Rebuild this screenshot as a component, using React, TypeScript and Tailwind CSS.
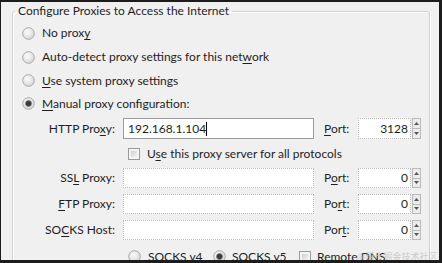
import React from 'react'

const font = { fontFamily: 'Lato, "Open Sans", sans-serif' }

const Radio: React.FC<{ checked?: boolean }> = ({ checked }) => (
  <svg width="13" height="13" viewBox="0 0 13 13" className="shrink-0">
    <defs>
      <radialGradient id={checked ? 'rg1' : 'rg0'} cx="40%" cy="35%" r="70%">
        <stop offset="0%" stopColor="#fbfbfb" />
        <stop offset="100%" stopColor="#d6d6d6" />
      </radialGradient>
    </defs>
    <circle cx="6.5" cy="6.5" r="5.8" fill={`url(#${checked ? 'rg1' : 'rg0'})`} stroke="#a9a9a9" strokeWidth="1" />
    {checked && <circle cx="6.5" cy="6.5" r="3" fill="#3a3a3a" stroke="#777" strokeWidth="0.8" />}
  </svg>
)

const Check: React.FC = () => (
  <span className="w-[12px] h-[12px] shrink-0 border border-[#9a9a9a] bg-[#f4f4f4] p-[2px] flex">
    <span className="flex-1 bg-gradient-to-br from-[#d0d0d0] to-[#f2f2f2]" />
  </span>
)

const U: React.FC<{ children: React.ReactNode }> = ({ children }) => <span className="underline underline-offset-2">{children}</span>

const Spinner: React.FC = () => (
  <div className="flex flex-col w-[9px] h-full ml-[1px]">
    <div className="flex-1 border border-[#b9b9b9] bg-[#ececec] flex items-center justify-center">
      <svg width="5" height="3" viewBox="0 0 5 3"><path d="M0 3 L2.5 0 L5 3Z" fill="#555" /></svg>
    </div>
    <div className="flex-1 border border-t-0 border-[#b9b9b9] bg-[#ececec] flex items-center justify-center">
      <svg width="5" height="3" viewBox="0 0 5 3"><path d="M0 0 L2.5 3 L5 0Z" fill="#555" /></svg>
    </div>
  </div>
)

const ProxyRow: React.FC<{
  label: React.ReactNode
  port: React.ReactNode
  value?: string
  portValue: string
  active?: boolean
  className?: string
}> = ({ label, port, value, portValue, active, className }) => (
  <div className={`flex items-center ${className ?? ''}`}>
    <div className="w-[93px] text-right">{label}</div>
    <div
      className={`ml-[8px] w-[191px] h-full bg-white flex items-center pl-[4px] ${
        active ? 'border border-[#9c9c9c]' : 'border border-dotted border-[#bdbdbd]'
      }`}
    >
      {value && (
        <>
          <span>{value}</span>
          <span className="w-px h-[14px] bg-black" />
        </>
      )}
    </div>
    <div className="ml-[10px] w-[34px]">{port}</div>
    <div className="flex h-full items-stretch">
      <div className="w-[53px] bg-white border border-dotted border-[#bdbdbd] flex items-center justify-end pr-[2px]">
        {portValue}
      </div>
      <Spinner />
    </div>
  </div>
)

const App: React.FC = () => {
  return (
    <div
      className="relative w-[442px] h-[263px] overflow-hidden bg-[#f0f0f0] border-t-2 border-l border-r-[3px] border-b-[3px] border-[#1c1c1c] text-[12px] leading-[16px] text-[#1e1e1e]"
      style={font}
    >
      <fieldset className="ml-[11px] mr-[9px] mt-[1px] border border-[#d0d4d8] rounded-[3px] shadow-[inset_1px_1px_0_#fff,1px_1px_0_#fff] pb-6">
        <legend className="ml-[2px] px-[3px]">Configure Proxies to Access the Internet</legend>

        <div className="pl-[9px] pt-[2px]">
          <div className="flex items-center gap-[7px] h-[24px]">
            <Radio />
            <span>
              No prox<U>y</U>
            </span>
          </div>
          <div className="flex items-center gap-[7px] h-[24px]">
            <Radio />
            <span>
              Auto-detect proxy settings for this net<U>w</U>ork
            </span>
          </div>
          <div className="flex items-center gap-[7px] h-[23px]">
            <Radio />
            <span>
              <U>U</U>se system proxy settings
            </span>
          </div>
          <div className="flex items-center gap-[7px] h-[23px]">
            <Radio checked />
            <span>
              <U>M</U>anual proxy configuration:
            </span>
          </div>

          <ProxyRow
            className="h-[21px] mt-[3px]"
            active
            value="192.168.1.104"
            portValue="3128"
            label={
              <>
                HTTP Pro<U>x</U>y:
              </>
            }
            port={
              <>
                <U>P</U>ort:
              </>
            }
          />

          <div className="h-[29px] flex items-center gap-[7px] pl-[106px]">
            <Check />
            <span>
              U<U>s</U>e this proxy server for all protocols
            </span>
          </div>

          <ProxyRow
            className="h-[20px]"
            portValue="0"
            label={
              <>
                SS<U>L</U> Proxy:
              </>
            }
            port={
              <>
                P<U>o</U>rt:
              </>
            }
          />
          <ProxyRow
            className="h-[20px] mt-[6px]"
            portValue="0"
            label={
              <>
                <U>F</U>TP Proxy:
              </>
            }
            port={
              <>
                Po<U>r</U>t:
              </>
            }
          />
          <ProxyRow
            className="h-[20px] mt-[6px]"
            portValue="0"
            label={
              <>
                SO<U>C</U>KS Host:
              </>
            }
            port={
              <>
                Por<U>t</U>:
              </>
            }
          />

          <div className="flex items-center h-[13px] mt-[10px] pl-[106px]">
            <Radio />
            <span className="ml-[7px] w-[65px]">
              SOC<U>K</U>S v4
            </span>
            <Radio checked />
            <span className="ml-[6px] w-[67px]">
              SOCKS <U>v</U>5
            </span>
            <Check />
            <span className="ml-[6px]">
              Remote <U>D</U>NS
            </span>
          </div>
        </div>
      </fieldset>

      <div
        className="absolute left-[356px] top-[249px] text-[9px] leading-[12px] text-[#c4c4c4] opacity-80 pointer-events-none"
        style={{ fontFamily: '"Noto Sans CJK SC", sans-serif' }}
      >
        @稀土掘金技术社区
      </div>
    </div>
  )
}

export default App
